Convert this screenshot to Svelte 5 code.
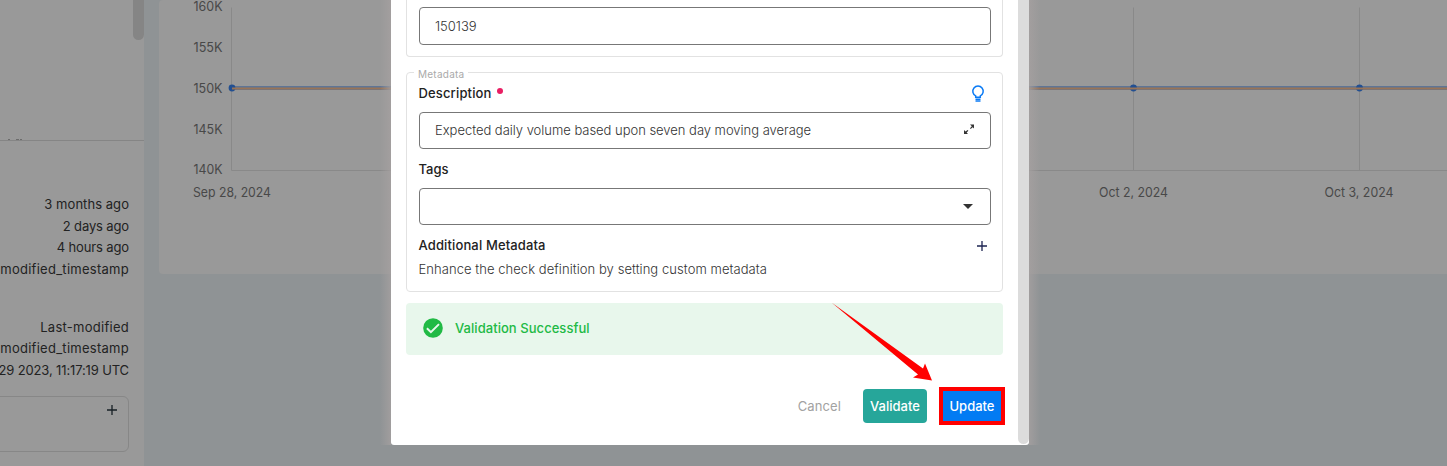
<script>
  const yTicks = [['160K', 6], ['155K', 47], ['150K', 88], ['145K', 129], ['140K', 169]];
  const xTicks = [['Sep 28, 2024', 232, 78], ['Oct 2, 2024', 1133.5, 69], ['Oct 3, 2024', 1359, 69]];
</script>

<div class="screen">
  <aside class="sidebar">
    <div class="upper">
      <svg class="clipped" width="24" height="2" viewBox="0 0 24 2"><path d="M8 1.500h2M16 1.500h3M20 1.500h2" stroke="#6c6c6c" /></svg>
      <span class="thumb"></span>
    </div>
    <ul class="facts first">
      <li class="months">3 months ago</li>
      <li class="tight">2 days ago</li>
      <li class="tight">4 hours ago</li>
      <li class="wide">modified_timestamp</li>
    </ul>
    <ul class="facts second">
      <li class="wide">Last-modified</li>
      <li class="wide">modified_timestamp</li>
      <li class="tight">29 2023, 11:17:19 UTC</li>
    </ul>
    <div class="tagbox">
      <svg width="12" height="12" viewBox="0 0 12 12"><path d="M6 1v10M1 6h10" stroke="#172026" stroke-width="1.3" /></svg>
    </div>
  </aside>

  <main class="content">
    <section class="chart">
      <svg width="1288" height="274" viewBox="159 0 1288 274">
        <g stroke="#898989" stroke-width="1">
          <path d="M231.5 7.500V170.500H1447M1133.500 7.500V170M1359.500 7.500V170" fill="none" />
        </g>
        {#each yTicks as [label, y]}
          <text x="222.500" y={y + 5} text-anchor="end" textLength={29} lengthAdjust="spacingAndGlyphs">{label}</text>
        {/each}
        {#each xTicks as [label, x, w]}
          <text {x} y="197" text-anchor="middle" textLength={w} lengthAdjust="spacingAndGlyphs">{label}</text>
        {/each}
        <path d="M233 88H1447" stroke="#5f7595" stroke-width="4" />
        <circle cx="232" cy="88" r="3.400" fill="#224f91" />
        <circle cx="1133.500" cy="88" r="3.400" fill="#224f91" />
        <circle cx="1359.500" cy="88" r="3.400" fill="#224f91" />
        <path d="M232 88.500H1447" stroke="#997456" stroke-width="2" />
      </svg>
    </section>
  </main>

  <div class="shade left"></div>
  <div class="shade right"></div>

  <div class="dialog">
    <div class="body">
      <section class="group top">
        <div class="field"><span class="number">150139</span></div>
      </section>

      <section class="group meta">
        <span class="legend">Metadata</span>
        <div class="row">
          <span class="label desc">Description</span><i class="dot"></i>
          <svg class="bulb" width="14" height="18" viewBox="0 0 14 18" fill="none" stroke="#0b7bf5" stroke-width="1.500">
            <path d="M4.700 12.200V10.900A5.200 5.200 0 1 1 9.300 10.900V12.200Z" />
            <path d="M4.500 14.300h5M4.500 16h5" stroke-width="1.400" />
          </svg>
        </div>
        <div class="field">
          <span class="value">Expected daily volume based upon seven day moving average</span>
          <svg class="expand" width="12" height="12" viewBox="0 0 12 12"><path d="M7 1.500H11V5.500L9.700 4.200 7.700 6 7 5.300 8.800 3.200ZM1 7V11H5L3.600 9.600 5.400 7.800 4.500 6.900 2.600 8.500Z" fill="#333" /></svg>
        </div>
        <div class="label tags">Tags</div>
        <div class="field">
          <svg class="caret" width="10" height="5" viewBox="0 0 10 5"><path d="M0 0H10L5 5Z" fill="#333" /></svg>
        </div>
        <div class="row add">
          <span class="label additional">Additional Metadata</span>
          <svg width="12" height="12" viewBox="0 0 12 12"><path d="M6 1v10M1 6h10" stroke="#1d2452" stroke-width="1.300" /></svg>
        </div>
        <p class="hint">Enhance the check definition by setting custom metadata</p>
      </section>

      <div class="success">
        <svg width="20" height="20" viewBox="0 0 20 20"><circle cx="10" cy="10" r="9.800" fill="#21ba45" /><path d="M3.900 10.300L7.900 14.200L16 6.100" fill="none" stroke="#e8f7ec" stroke-width="2" /></svg>
        <span>Validation Successful</span>
      </div>

      <footer>
        <span class="cancel">Cancel</span>
        <button class="validate">Validate</button>
        <button class="update">Update</button>
      </footer>
    </div>
    <div class="track"></div>
  </div>

  <svg class="arrow" width="104" height="82" viewBox="830 300 104 82"><path d="M831.500 302.500L923 368.500L925 363.500L932 380.500L913 377.500L918 374.500Z" fill="#f00" /></svg>
</div>

<style>
  :global(body) { margin: 0; background: #8f9395; }
  .screen { position: relative; display: flex; width: 1447px; height: 466px; overflow: hidden; background: #8f9395; font: 500 13px/22px Inter, sans-serif; color: #222; }
  .sidebar { box-sizing: border-box; width: 144px; height: 466px; background: #999; flex: none; }
  .upper { box-sizing: border-box; height: 141px; border-bottom: 1px solid #858585; display: flex; justify-content: space-between; }
  .clipped { align-self: flex-end; }
  .thumb { width: 11px; height: 40px; border-radius: 0 0 6px 6px; background: #858585; }
  .facts { list-style: none; margin: 36px 0 0; padding: 0 15px 0 0; display: flex; flex-direction: column; align-items: flex-end; font-weight: 400; line-height: 21.600px; white-space: nowrap; }
  .facts.first { margin-top: 53px; }
  .facts.second { margin-top: 36.500px; }
  .months { letter-spacing: 0.050px; }
  .tight { letter-spacing: -0.130px; }
  .wide { letter-spacing: 0.270px; }
  .tagbox { box-sizing: border-box; margin: 14.500px 15px 0 -6px; height: 56px; border: 1px solid #878787; border-radius: 6px; padding: 7px 10px; display: flex; justify-content: flex-end; }
  .content { flex: 1; padding-left: 15px; }
  .chart { height: 274px; background: #999; border-radius: 4px 0 0 4px; }
  .chart svg { display: block; }
  .chart text { font: 400 13px Inter, sans-serif; fill: #484848; }
  .shade { position: absolute; top: 0; width: 11px; height: 445px; }
  .shade.left { left: 380px; background: linear-gradient(90deg, rgba(165, 160, 160, 0), rgba(165, 160, 160, 0.8)); }
  .shade.right { left: 1029px; background: linear-gradient(270deg, rgba(165, 160, 160, 0), rgba(165, 160, 160, 0.8)); }
  .dialog { position: absolute; left: 391px; top: 0; width: 638px; height: 445px; background: #fff; border-radius: 0 0 3px 3px; display: flex; overflow: hidden; }
  .body { flex: 1; padding: 0 15px; }
  .track { width: 11px; height: 444px; background: #dcdcdc; border-radius: 0 0 6px 6px; }
  .group { box-sizing: border-box; border: 1px solid #e2e2e2; border-radius: 4px; padding: 0 11px 0 12px; width: 597px; }
  .top { height: 57px; border-top: 0; border-radius: 0 0 4px 4px; padding-top: 7px; }
  .meta { position: relative; margin-top: 15px; height: 220px; }
  .legend { position: absolute; left: 7px; top: -6px; padding: 0 4px; line-height: 14px; background: #fff; color: #aaa; font-size: 10px; font-weight: 400; letter-spacing: 0.250px; }
  .field { box-sizing: border-box; height: 38px; border: 1px solid #777; border-radius: 4px; padding: 0 15px; display: flex; align-items: center; font-weight: 300; color: #333; }
  .number { letter-spacing: 0; }
  .value { letter-spacing: -0.025px; padding-bottom: 2px; }
  .meta .field { height: 37px; }
  .field svg { margin-left: auto; }
  .field .expand { margin-bottom: 3px; }
  .caret { margin-right: 2px; }
  .row { display: flex; align-items: center; height: 39px; }
  .row > svg:last-child { margin-left: auto; }
  .label { font-weight: 500; color: #222; margin-left: -0.500px; }
  .desc { letter-spacing: 0.150px; }
  .additional { letter-spacing: 0.130px; }
  .dot { width: 6px; height: 6px; border-radius: 50%; background: #e91e63; margin: -4px 0 0 5.500px; }
  .bulb { margin-right: 6px; margin-top: 3px; }
  .tags { height: 39px; line-height: 40px; }
  .add { height: 40px; }
  .row.add > svg { margin-right: 3px; margin-top: 1px; }
  .hint { margin: -7px 0 0 -0.500px; font-weight: 300; color: #333; white-space: nowrap; letter-spacing: 0.060px; }
  .success { display: flex; align-items: center; gap: 12px; height: 52px; margin-top: 11px; width: 597px; box-sizing: border-box; padding: 0 17px 2px; background: #e8f7ec; border-radius: 4px; color: #21ba45; letter-spacing: 0.050px; }
  footer { display: flex; align-items: center; justify-content: flex-end; margin: 32px -2px 0 0; height: 38px; width: 599px; }
  .cancel { color: #a2a2a2; font-weight: 400; margin-right: 22px; letter-spacing: 0.100px; }
  button { font: 500 13px Inter, sans-serif; color: #fff; padding: 0; border: 0; border-radius: 4px; height: 34px; white-space: nowrap; }
  .validate { width: 64px; background: #26a69a; margin-right: 12px; }
  .update { width: 66px; height: 38px; border: 4px solid #f00; border-radius: 0; background: #027bf3; }
  .arrow { position: absolute; left: 830px; top: 300px; }
</style>
